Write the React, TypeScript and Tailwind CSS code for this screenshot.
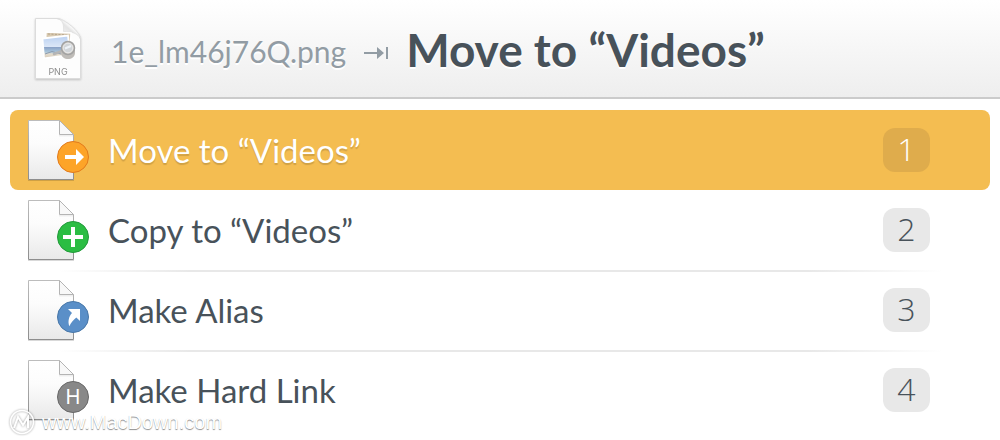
import { useState } from 'react';
import { clsx } from 'clsx';

type Kind = 'move' | 'copy' | 'alias' | 'link';

const actions: { kind: Kind; label: string }[] = [
  { kind: 'move', label: 'Move to “Videos”' },
  { kind: 'copy', label: 'Copy to “Videos”' },
  { kind: 'alias', label: 'Make Alias' },
  { kind: 'link', label: 'Make Hard Link' },
];

const badges = {
  move: { fill: '#fda428', stroke: '#e27a1c' },
  copy: { fill: '#2bbd43', stroke: '#22993a' },
  alias: { fill: '#5a8fc8', stroke: '#4877a8' },
  link: { fill: '#888888', stroke: '#686868' },
};

function PngIcon() {
  return (
    <svg width="50" height="64" viewBox="0 0 50 64" className="shrink-0 drop-shadow-[0_1px_1px_rgba(0,0,0,0.2)]" aria-hidden="true">
      <defs>
        <linearGradient id="sky" x1="0" y1="0" x2="0" y2="1">
          <stop offset="0" stopColor="#b9d0f2" />
          <stop offset="0.5" stopColor="#dce7f7" />
          <stop offset="0.52" stopColor="#8ba3c8" />
          <stop offset="0.72" stopColor="#a9c6da" />
          <stop offset="0.8" stopColor="#e4dccd" />
          <stop offset="1" stopColor="#d5c9b8" />
        </linearGradient>
        <linearGradient id="curl" x1="0" y1="1" x2="1" y2="0">
          <stop offset="0" stopColor="#ffffff" />
          <stop offset="0.5" stopColor="#e4e4e4" />
          <stop offset="0.6" stopColor="#fafafa" />
        </linearGradient>
      </defs>
      <path d="M2.500 1.500 H24 C31 1.500 47.500 15 47.500 22 V61.500 H2.500 Z" fill="#fdfdfd" stroke="#dcdcdc" />
      <path d="M24 1.500 C30 3 31 8 30.500 14.500 C38 14.500 45 16 47.500 22 C47.500 15 31 1.500 24 1.500 Z" fill="url(#curl)" stroke="#dddddd" strokeWidth="0.700" />
      <path d="M13 15 L38 16 L37 38 L12 37 Z" fill="#d8c9b0" stroke="#ffffff" strokeWidth="1.500" />
      <path d="M15 17 L36 18" stroke="#b6a58c" strokeDasharray="2 1.500" />
      <path d="M9.500 21.500 L35 18.500 L37 38 L11 41.500 Z" fill="url(#sky)" stroke="#ffffff" strokeWidth="1.800" />
      <path d="M12 37 L19 34.500 L28 37" fill="none" stroke="#8b9aae" />
      <path d="M21 37 L29 34" stroke="#b5b5b5" strokeWidth="2.500" strokeLinecap="round" />
      <path d="M28 31 V36 C28.500 44 41.500 44 42 36 V31 Z" fill="#bfbcb8" />
      <circle cx="35" cy="31" r="6.500" fill="#d4d0ca" stroke="#a2a2a2" strokeWidth="1.500" />
      <circle cx="35" cy="31" r="4.800" fill="#d0d4d8" stroke="#eeeeee" strokeWidth="0.800" />
      <path d="M32 31.500 L38 29" stroke="#eef3f8" strokeWidth="2" />
      <text x="25" y="57.500" textAnchor="middle" fontSize="9" fontFamily="Inter, sans-serif" fill="#8d8d8d">PNG</text>
    </svg>
  );
}

function FileIcon({ kind }: { kind: Kind }) {
  return (
    <svg width="64" height="64" viewBox="0 0 64 64" className="shrink-0" aria-hidden="true">
      <defs>
        <linearGradient id={`page-${kind}`} x1="0" y1="0" x2="0" y2="1">
          <stop offset="0" stopColor="#ffffff" />
          <stop offset="0.4" stopColor="#fcfcfc" />
          <stop offset="1" stopColor="#e9e9e9" />
        </linearGradient>
        <linearGradient id={`edge-${kind}`} x1="0" y1="0" x2="0" y2="1">
          <stop offset="0" stopColor="#bcbcbc" />
          <stop offset="1" stopColor="#8e8e8e" />
        </linearGradient>
      </defs>
      <path d="M2 62.500 H48" stroke="#000000" strokeOpacity="0.15" />
      <path d="M2.500 2.500 H33.500 L47.500 16.500 V61.500 H2.500 Z" fill={`url(#page-${kind})`} stroke={`url(#edge-${kind})`} />
      <path d="M33 17.500 H47" stroke="#000000" strokeOpacity="0.06" strokeWidth="2" />
      <path d="M33.500 2.500 V16.500 H47.500 Z" fill="#f8f8f8" stroke="#b4b4b4" />
      <circle cx="47" cy="39" r="15.500" fill={badges[kind].fill} stroke={badges[kind].stroke} />
      {kind === 'move' && <path d="M39 37 H50 V31 L58 39 L50 47 V41 H39 Z" fill="#ffffff" />}
      {kind === 'copy' && <path d="M37 37 H45 V29 H49 V37 H57 V41 H49 V49 H45 V41 H37 Z" fill="#ffffff" />}
      {kind === 'alias' && (
        <path d="M42 31 H54 V43 L50.300 39.500 C47.200 42 45 44.500 43.300 48.300 C41.600 43 43 38.500 46 35 Z" fill="#ffffff" />
      )}
      {kind === 'link' && (
        <text x="47" y="46" textAnchor="middle" fontSize="20" fontFamily="Inter, sans-serif" fill="#ffffff">H</text>
      )}
    </svg>
  );
}

function Watermark() {
  return (
    <div className="pointer-events-none absolute bottom-1 left-2 flex items-center gap-1.5 text-white">
      <svg width="28" height="28" viewBox="0 0 28 28" fill="none" className="drop-shadow-[0_0_1px_rgba(0,0,0,0.4)]" aria-hidden="true">
        <circle cx="14" cy="14" r="11.500" stroke="currentColor" strokeWidth="1.500" />
        <path d="M6 20 L10 9 L15 17 L20 9 V20" stroke="currentColor" strokeWidth="2" />
      </svg>
      <span className="font-['Liberation_Sans',sans-serif] text-[20px] leading-6 text-shadow-[0_1px_1px_rgba(0,0,0,0.45)]">www.MacDown.com</span>
    </div>
  );
}

export default function App() {
  const [selected, setSelected] = useState(0);

  return (
    <div className="relative bg-white font-[Lato,sans-serif] text-[#48525a]">
      {/* Header */}
      <header className="flex h-[99px] items-center border-b-2 border-[#cbcbcb] bg-linear-to-b from-white to-[#eeeeee] pl-[33px] text-shadow-[0_2px_0_white]">
        <PngIcon />
        <span className="ml-7 pt-1 text-[30px] leading-10 text-[#929ca4]">1e_lm46j76Q.png</span>
        <svg width="24" height="14" viewBox="0 0 24 14" className="ml-[18px] mt-2 shrink-0 text-[#929ca4]" fill="currentColor" aria-hidden="true">
          <path d="M0 6 H13 V1 L20 7 L13 13 V8 H0 Z M22 1 H24 V13 H22 Z" />
        </svg>
        <h1 className="ml-[18px] pt-0.5 text-[46px] leading-[60px] font-bold">Move to “Videos”</h1>
      </header>

      {/* Actions */}
      <ul className="px-2.5 pt-[11px] pb-[10px]">
        {actions.map((a, i) => (
          <li key={a.kind} className="relative">
            {i > 1 && (
              <div className="absolute top-0 right-12 left-12 h-0.5 bg-[linear-gradient(to_right,transparent,#e8e8e8_15%,#e8e8e8_85%,transparent)]" />
            )}
            <button
              type="button"
              onClick={() => setSelected(i)}
              className={clsx(
                'flex h-20 w-full items-center rounded-lg pr-[60px] pl-4 text-left',
                i === selected && 'bg-[#f4bd51] text-white text-shadow-[0_2px_1px_rgba(0,0,0,0.15)]'
              )}
            >
              <FileIcon kind={a.kind} />
              <span className="ml-[18px] flex-1 text-[33px] leading-10">{a.label}</span>
              <kbd
                className={clsx(
                  "flex h-11 w-[47px] items-center justify-center rounded-xl pb-0.5 font-['Open_Sans',sans-serif] text-[32px] leading-10 font-light text-shadow-none",
                  i === selected ? 'bg-[#dfac4c]' : 'bg-[#e8e8e8]'
                )}
              >
                {i + 1}
              </kbd>
            </button>
          </li>
        ))}
      </ul>
      <Watermark />
    </div>
  );
}
